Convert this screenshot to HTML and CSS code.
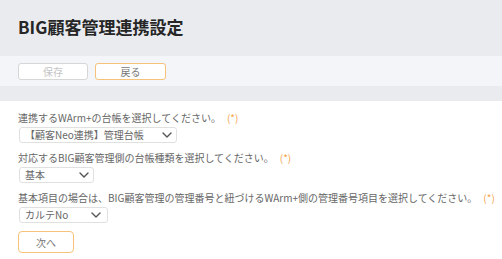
FILE: index.html
```html
<!DOCTYPE html>
<html lang="ja">
<head>
<meta charset="UTF-8" />
<meta name="viewport" content="width=device-width, initial-scale=1" />
<title>BIG顧客管理連携設定</title>
<link rel="stylesheet" href="styles.css">
</head>
<body>

<div class="page-header">
  <h1>BIG顧客管理連携設定</h1>
</div>

<div class="toolbar">
  <button class="tool-button" disabled>保存</button>
  <button class="tool-button primary">戻る</button>
</div>

<div class="panel">
  <div class="field">
    <label class="field-label">連携するWArm+の台帳を選択してください。<span class="required">(*)</span></label>
    <div class="select-wrap ledger">
      <select>
        <option>【顧客Neo連携】管理台帳</option>
      </select>
      <!-- 下向き矢印 -->
      <svg class="chevron" viewBox="0 0 10 6" width="10" height="6"><path d="M1 1l4 4 4-4" fill="none" stroke="#555" stroke-width="1.4" stroke-linecap="round" stroke-linejoin="round"/></svg>
    </div>
  </div>

  <div class="field">
    <label class="field-label">対応するBIG顧客管理側の台帳種類を選択してください。<span class="required">(*)</span></label>
    <div class="select-wrap kind">
      <select>
        <option>基本</option>
      </select>
      <svg class="chevron" viewBox="0 0 10 6" width="10" height="6"><path d="M1 1l4 4 4-4" fill="none" stroke="#555" stroke-width="1.4" stroke-linecap="round" stroke-linejoin="round"/></svg>
    </div>
  </div>

  <div class="field">
    <label class="field-label">基本項目の場合は、BIG顧客管理の管理番号と紐づけるWArm+側の管理番号項目を選択してください。<span class="required">(*)</span></label>
    <div class="select-wrap key">
      <select>
        <option>カルテNo</option>
      </select>
      <svg class="chevron" viewBox="0 0 10 6" width="10" height="6"><path d="M1 1l4 4 4-4" fill="none" stroke="#555" stroke-width="1.4" stroke-linecap="round" stroke-linejoin="round"/></svg>
    </div>
  </div>

  <button class="next-button">次へ</button>
</div>

</body>
</html>
```

FILE: styles.css
```css
/* Reset */
* {
  margin: 0; padding: 0; box-sizing: border-box;
}
html, body {
  height: 100%;
}
body {
  background: #e9ebef;
  font-family: "Noto Sans CJK JP", "Noto Sans", sans-serif;
  color: #666;
  display: flex;
  flex-direction: column;
  overflow: hidden;
}

/* タイトル */
.page-header {
  flex-shrink: 0;
  height: 56px;
  display: flex;
  align-items: center;
  padding: 0 18px 3px;
}
.page-header h1 {
  font-size: 17px;
  font-weight: bold;
  line-height: 1;
  color: #262626;
}

/* ボタンバー */
.toolbar {
  flex-shrink: 0;
  height: 30px;
  background: #f4f5f8;
  display: flex;
  align-items: flex-start;
  gap: 7px;
  padding: 7px 18px 0;
}
.tool-button {
  width: 70px;
  height: 17px;
  font-family: inherit;
  font-size: 10px;
  line-height: 1;
  color: #777;
  background: #fff;
  border: 1px solid #f7c27a;
  border-radius: 3px;
}
.tool-button[disabled] {
  color: #c4c4c4;
  border-color: #d6d6d6;
}
.tool-button.primary {
  width: 71px;
}

/* 入力エリア */
.panel {
  flex: 1;
  margin-top: 15px;
  background: #fff;
  padding: 10px 8px 0 18px;
}
.field {
  margin-bottom: 8px;
}
.field-label {
  display: block;
  font-size: 10px;
  line-height: 14px;
  color: #666;
  white-space: nowrap;
}
.required {
  margin-left: 6px;
  color: #f5a54a;
}

.select-wrap {
  position: relative;
  margin: 2px 0 0 1px;
}
.select-wrap select {
  display: block;
  width: 100%;
  height: 16px;
  appearance: none;
  -webkit-appearance: none;
  font-family: inherit;
  font-size: 10px;
  line-height: 14px;
  color: #666;
  background: #fff;
  border: 1px solid #e0e0e0;
  border-radius: 3px;
  padding: 0 18px 0 5px;
  outline: none;
}
.select-wrap .chevron {
  position: absolute;
  top: 5px;
  right: 5px;
  pointer-events: none;
}
.select-wrap.ledger { width: 158px; }
.select-wrap.kind { width: 75px; }
.select-wrap.key { width: 89px; }
.select-wrap.key .chevron { right: 7px; }

.next-button {
  display: block;
  width: 56px;
  height: 22px;
  font-family: inherit;
  font-size: 10px;
  color: #777;
  background: #fff;
  border: 1px solid #f7c27a;
  border-radius: 4px;
}
```
